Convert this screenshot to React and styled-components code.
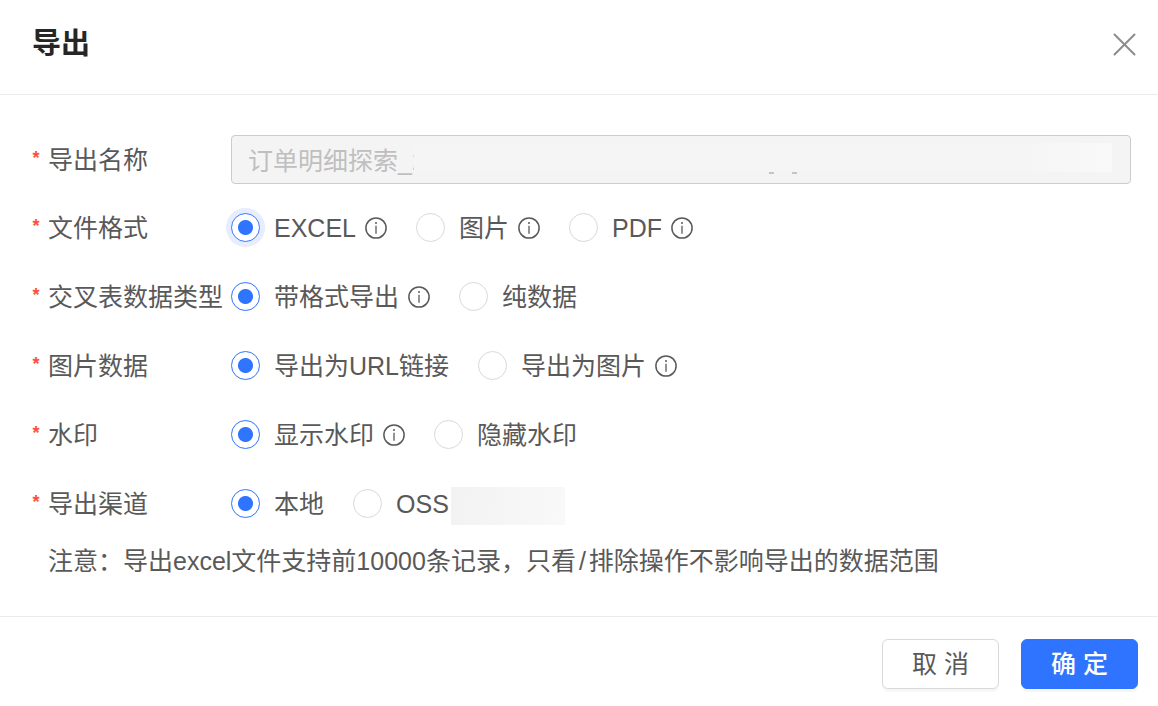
import React, { useState } from "react";
import styled, { createGlobalStyle, css } from "styled-components";

const GlobalStyle = createGlobalStyle`
  *, *::before, *::after { box-sizing: border-box; }
  body {
    margin: 0;
    background: #fff;
    color: #595959;
    font-family: "Liberation Sans", "Noto Sans CJK SC", sans-serif;
    font-size: 25px;
    line-height: 36px;
  }
  button, input { font: inherit; color: inherit; }
`;

const Dialog = styled.form`
  display: flex;
  flex-direction: column;
  background: #fff;
`;

const Header = styled.header`
  display: flex;
  align-items: center;
  justify-content: space-between;
  padding: 22px 20px 28px 32px;
  border-bottom: 1px solid #ebebeb;
`;

const Title = styled.h1`
  margin: 0;
  font-size: 29px;
  line-height: 44px;
  font-weight: 700;
  color: #262626;
`;

const CloseButton = styled.button`
  display: flex;
  padding: 2px;
  border: 0;
  background: none;
  color: #8c8c8c;
  cursor: pointer;
`;

const Body = styled.main`
  display: flex;
  flex-direction: column;
  gap: 18px;
  padding: 40px 27px 36px 32px;
`;

const rowLayout = css`
  display: grid;
  grid-template-columns: 199px 1fr;
  align-items: center;
`;

const FieldRow = styled.div`
  ${rowLayout}
`;

const RadioRow = styled.div`
  ${rowLayout}
  min-height: 51px;
`;

const LabelText = styled.span`
  display: flex;
  align-items: center;
  gap: 8px;
  white-space: nowrap;

  &::before {
    content: "*";
    width: 8px;
    padding-bottom: 4px;
    text-align: center;
    font-size: 18px;
    font-weight: 700;
    line-height: 28px;
    color: #ff4d40;
  }
`;

const NameBox = styled.div`
  position: relative;
`;

const NameInput = styled.input`
  display: block;
  width: 100%;
  height: 49px;
  padding: 0 16px 2px;
  border: 1px solid #cccccc;
  border-radius: 4px;
  background: #f4f4f4;
  color: #bfbfbf;
`;

const NameMask = styled.div`
  position: absolute;
  top: 8px;
  bottom: 12px;
  left: 183px;
  right: 19px;
  background: linear-gradient(90deg, #f5f5f5 88%, #f9f9f9);

  /* descenders of the covered text */
  &::after {
    content: "";
    position: absolute;
    top: 100%;
    left: 355px;
    width: 5px;
    height: 2px;
    background: #c4c4c4;
    box-shadow: 23px 0 0 #c4c4c4;
  }
`;

const Options = styled.div`
  display: flex;
  align-items: center;
  gap: 29px;
`;

const Option = styled.label`
  display: flex;
  align-items: center;
  white-space: nowrap;
  cursor: pointer;
`;

const Radio = styled.input`
  appearance: none;
  flex: none;
  width: 29px;
  height: 29px;
  margin: 0 14px 0 0;
  border: 1px solid #d9d9d9;
  border-radius: 50%;
  background: #fff;

  &:checked {
    border-color: #2e74ff;
    background: radial-gradient(circle, #2e74ff 7px, #fff 8px);
  }

  ${(p) => p.$halo && css`
    &:checked { box-shadow: 0 0 0 5px #e6edff; }
  `}
`;

const InfoSvg = styled.svg`
  flex: none;
  margin-left: 9px;
`;

const ChannelMask = styled.span`
  width: 114px;
  height: 38px;
  margin: 4px 0 0 2px;
  background: linear-gradient(100deg, #f2f2f2, #f9f9f9);
`;

const Note = styled.p`
  margin: -4px 0 0;
  padding: 0 0 1px 16px;
`;

const Slash = styled.span`
  margin: 0 3px;
`;

const Footer = styled.footer`
  display: flex;
  justify-content: flex-end;
  gap: 22px;
  padding: 22px 20px 17px;
  border-top: 1px solid #ebebeb;
`;

const Button = styled.button`
  width: 117px;
  height: 50px;
  padding: 0;
  border: 1px solid ${(p) => (p.$primary ? "#2e74ff" : "#d9d9d9")};
  border-radius: 6px;
  background: ${(p) => (p.$primary ? "#2e74ff" : "#fff")};
  color: ${(p) => (p.$primary ? "#fff" : "#595959")};
  font-weight: ${(p) => (p.$primary ? 500 : 400)};
  box-shadow: 0 3px 0 rgba(0, 0, 0, 0.03);
  cursor: pointer;
`;

const InfoIcon = () => (
  <InfoSvg width="22" height="22" viewBox="0 0 22 22" fill="none" aria-hidden="true">
    <circle cx="11" cy="11" r="10.1" stroke="currentColor" strokeWidth="1.5" />
    <path d="M11 8.8v8" stroke="currentColor" strokeWidth="1.3" />
    <circle cx="11" cy="6" r="1" fill="currentColor" />
  </InfoSvg>
);

const groups = [
  {
    name: "format",
    label: "文件格式",
    halo: true,
    options: [
      { text: "EXCEL", info: true },
      { text: "图片", info: true },
      { text: "PDF", info: true },
    ],
  },
  {
    name: "crosstab",
    label: "交叉表数据类型",
    options: [{ text: "带格式导出", info: true }, { text: "纯数据" }],
  },
  {
    name: "imageData",
    label: "图片数据",
    options: [{ text: "导出为URL链接" }, { text: "导出为图片", info: true }],
  },
  {
    name: "watermark",
    label: "水印",
    options: [{ text: "显示水印", info: true }, { text: "隐藏水印" }],
  },
  {
    name: "channel",
    label: "导出渠道",
    options: [{ text: "本地" }, { text: "OSS", masked: true }],
  },
];

function RadioGroup({ name, label, halo, options }) {
  const [selected, setSelected] = useState(0);
  return (
    <RadioRow role="radiogroup" aria-labelledby={`${name}-label`}>
      <LabelText id={`${name}-label`}>{label}</LabelText>
      <Options>
        {options.map((option, i) => (
          <Option key={option.text}>
            <Radio
              type="radio"
              name={name}
              $halo={halo}
              checked={selected === i}
              onChange={() => setSelected(i)}
            />
            {option.text}
            {option.info && <InfoIcon />}
            {option.masked && <ChannelMask />}
          </Option>
        ))}
      </Options>
    </RadioRow>
  );
}

export default function App() {
  return (
    <>
      <GlobalStyle />
      <Dialog onSubmit={(e) => e.preventDefault()}>
        <Header>
          <Title>导出</Title>
          <CloseButton type="button" aria-label="关闭">
            <svg width="24" height="24" viewBox="0 0 24 24" fill="none" aria-hidden="true">
              <path d="M2.5 2.5l20 20M22.5 2.5l-20 20" stroke="currentColor" strokeWidth="2" strokeLinecap="round" />
            </svg>
          </CloseButton>
        </Header>
        <Body>
          <FieldRow>
            <LabelText as="label" htmlFor="export-name">导出名称</LabelText>
            <NameBox>
              <NameInput id="export-name" defaultValue="订单明细探索_2" disabled />
              <NameMask />
            </NameBox>
          </FieldRow>
          {groups.map((group) => (
            <RadioGroup key={group.name} {...group} />
          ))}
          <Note>
            注意：导出excel文件支持前10000条记录，只看<Slash>/</Slash>排除操作不影响导出的数据范围
          </Note>
        </Body>
        <Footer>
          <Button type="button">取 消</Button>
          <Button type="submit" $primary>确 定</Button>
        </Footer>
      </Dialog>
    </>
  );
}
